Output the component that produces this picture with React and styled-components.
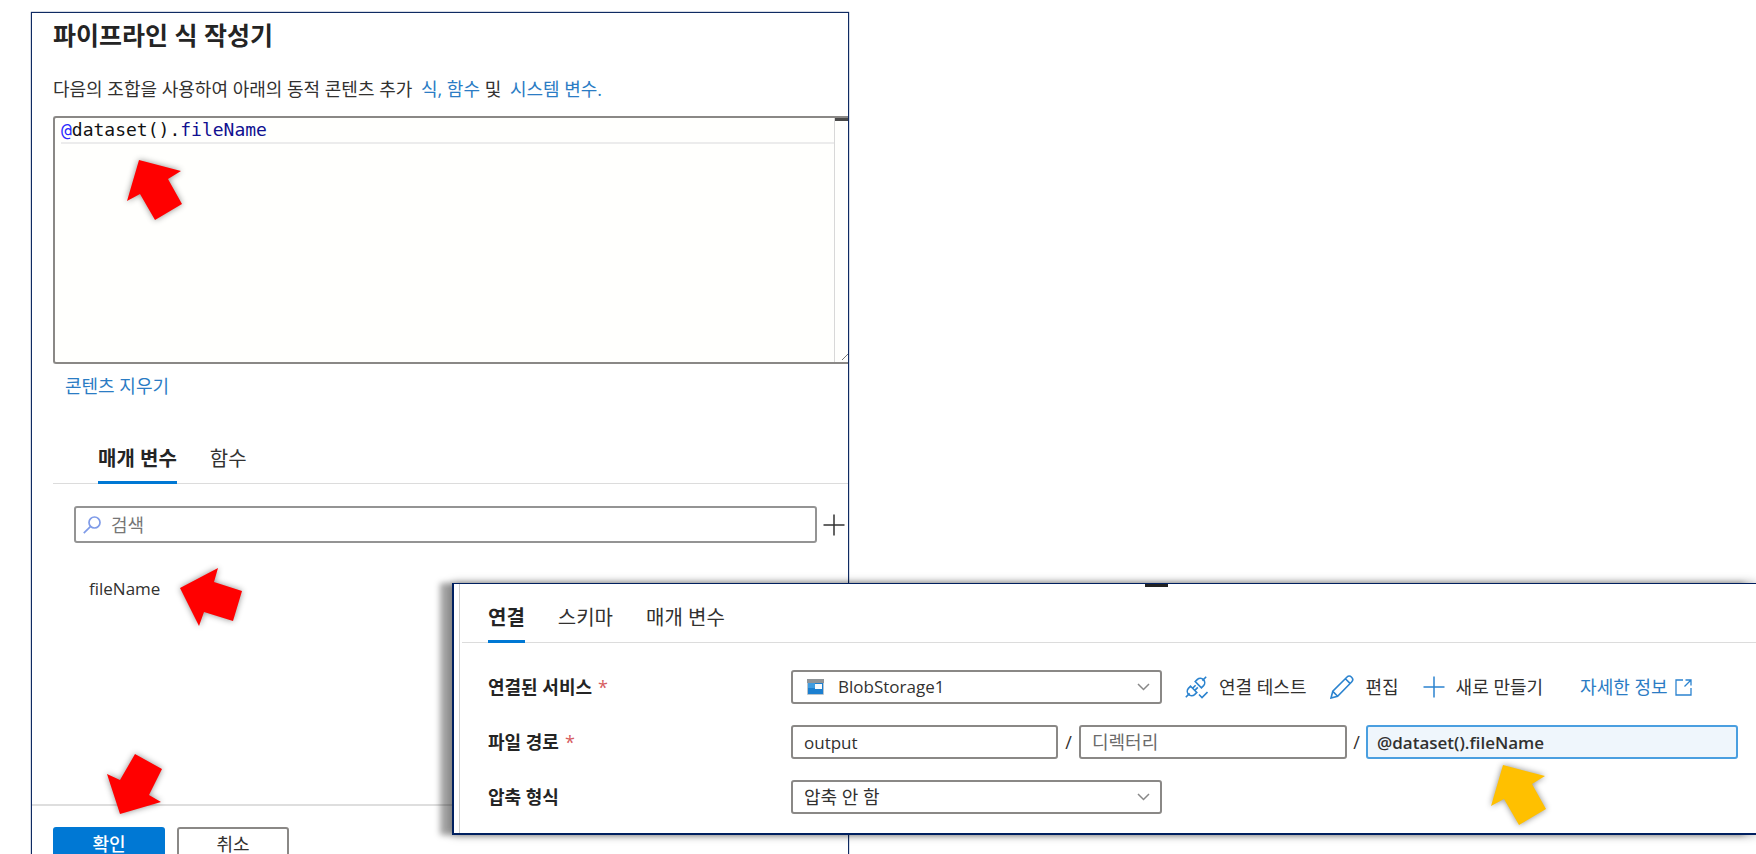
import React from "react";
import styled, { createGlobalStyle } from "styled-components";

const ui = '"Open Sans", "Noto Sans CJK KR", sans-serif';
const navy = "#0f2a63";
const ink = "#323130";
const blue = "#0078d4";
const linkBlue = "#2b7cc4";
const grey = "#8a8886";

const Global = createGlobalStyle`
  *, *::before, *::after { box-sizing: border-box; }
  body { margin: 0; background: #fff; color: ${ink}; font: 18px/26px ${ui}; }
  button, input, select { font: inherit; color: inherit; }
`;

const Page = styled.main`
  position: relative;
  height: 100vh;
  overflow: hidden;
  padding: 12px 0 0 31px;
`;

const Builder = styled.section`
  position: relative;
  width: 818px;
  max-width: 100%;
  padding-top: 6px;
  border: 1px solid ${navy};
  box-shadow: 0 0 1px ${navy};
`;

const Title = styled.h1`
  margin: 0 0 25px 21px;
  font-size: 25px;
  line-height: 32px;
  font-weight: 700;
  color: #242424;
`;

const Intro = styled.p`
  margin: 0 0 14px 21px;
  white-space: nowrap;
`;

const Link = styled.a`
  color: ${linkBlue};
  text-decoration: none;
  margin-left: ${(p) => (p.$spaced ? 4 : 0)}px;
`;

const Editor = styled.div`
  position: relative;
  display: flex;
  height: 248px;
  margin-left: 21px;
  border: 2px solid ${grey};
  border-right: 0;
  border-radius: 3px 0 0 3px;
  background: #fffffd;
`;

const Code = styled.div`
  flex: 1;
  padding-left: 6px;
  outline: 0;
  font: 18px/24px "DejaVu Sans Mono", monospace;
  color: #111;
`;

const CodeLine = styled.div`
  height: 26px;
  border: 1px solid #ececec;
  border-width: 0 0 2px;
`;

const Token = styled.span`
  color: ${(p) => p.$color};
`;

const Ruler = styled.div`
  display: flex;
  width: 14px;
  flex-direction: column;
  justify-content: space-between;
  align-items: flex-end;
  border-left: 1px solid #d8d8d8;
`;

const RulerMark = styled.div`
  width: 100%;
  height: 3px;
  background: #4a4a4a;
`;

const ClearRow = styled.div`
  padding: 9px 0 0 33px;
`;

const Tabs = styled.div`
  display: flex;
  gap: 33px;
  border-bottom: 1px solid #dcdcdc;
`;

const BuilderTabs = styled(Tabs)`
  margin: 45px 0 0 21px;
  padding-left: 45px;
`;

const Tab = styled.button`
  height: 40px;
  margin-bottom: -1px;
  padding: 1px 0 8px;
  border: 0;
  border-bottom: 3px solid ${(p) => (p.$active ? blue : "transparent")};
  background: none;
  font-size: 20px;
  line-height: 28px;
  font-weight: ${(p) => (p.$active ? 700 : 400)};
  color: ${(p) => (p.$active ? "#242424" : ink)};
`;

const SearchRow = styled.div`
  display: flex;
  align-items: center;
  gap: 6px;
  margin: 22px 3px 0 42px;
`;

const SearchBox = styled.label`
  display: flex;
  align-items: center;
  flex: 1;
  gap: 10px;
  height: 37px;
  padding-left: 7px;
  border: 2px solid #949494;
  border-radius: 3px;
`;

const SearchInput = styled.input`
  flex: 1;
  min-width: 0;
  padding: 0;
  border: 0;
  outline: 0;
  background: none;
  &::placeholder { color: #767676; opacity: 1; }
`;

const IconButton = styled.button`
  display: flex;
  padding: 0;
  border: 0;
  background: none;
`;

const Parameters = styled.ul`
  position: relative;
  min-height: 228px;
  margin: 33px 0 0;
  padding: 0 0 0 57px;
  font-size: 17px;
  list-style: none;
`;

const Footer = styled.footer`
  position: relative;
  display: flex;
  gap: 12px;
  padding: 21px 21px 20px;
  border-top: 2px solid #dedede;
`;

const FooterButton = styled.button`
  width: 112px;
  height: 34px;
  padding: 0;
  line-height: 20px;
  border: ${(p) => (p.$primary ? "0" : "2px solid #8a8886")};
  border-radius: 3px;
  background: ${(p) => (p.$primary ? blue : "#fff")};
  color: ${(p) => (p.$primary ? "#fff" : ink)};
  font-weight: ${(p) => (p.$primary ? 500 : 400)};
`;

const Dataset = styled.section`
  position: absolute;
  top: 583px;
  left: 452px;
  right: 0;
  height: 252px;
  padding-left: 5px;
  border: 1px solid #002060;
  border-width: 1px 0 2px 2px;
  background: #fff;
  box-shadow: -12px 0 6px rgba(0, 0, 0, 0.36), 0 0 9px rgba(0, 0, 0, 0.36);
`;

const DatasetBody = styled.div`
  height: 100%;
  padding-left: 2px;
  border-left: 1px solid #d0d0d0;
`;

const Grip = styled.div`
  position: absolute;
  top: 0;
  left: 691px;
  width: 23px;
  height: 3px;
  background: #222;
`;

const DatasetTabs = styled(Tabs)`
  padding: 19px 0 0 26px;
`;

const Form = styled.form`
  display: grid;
  gap: 21px;
  padding: 27px 18px 0 26px;
`;

const FormRow = styled.div`
  display: grid;
  grid-template-columns: 303px 1fr;
  align-items: center;
  height: 34px;
`;

const Label = styled.label`
  font-weight: 700;
  color: #242424;
`;

const Required = styled.span`
  margin-left: 6px;
  font-weight: 400;
  color: #d65c60;
`;

const Controls = styled.div`
  display: flex;
  align-items: center;
  white-space: nowrap;
`;

const PathControls = styled.div`
  display: grid;
  grid-template-columns: 267fr 21px 268fr 19px 372fr;
  align-items: center;
`;

const Field = styled.input`
  width: 100%;
  min-width: 0;
  height: 34px;
  padding: 0 11px;
  border: 2px solid #8a8886;
  border-radius: 3px;
  outline: 0;
  background: #fff;
  font-size: 17px;
  &::placeholder { color: #6b6b6b; opacity: 1; font-size: 18px; }
`;

const ExpressionBox = styled.div`
  position: relative;
  display: flex;
  min-width: 0;
`;

const ExpressionField = styled(Field)`
  padding: 0 9px;
  border-color: #4a9fe0;
  background: #eff6fc;
  font-weight: 600;
`;

const Slash = styled.span`
  text-align: center;
`;

const SelectBox = styled.div`
  position: relative;
  width: 371px;
`;

const Select = styled.select`
  width: 100%;
  height: 34px;
  padding: 0 40px 0 ${(p) => (p.$icon ? 45 : 11)}px;
  border: 2px solid #8a8886;
  border-radius: 3px;
  outline: 0;
  background: #fff;
  font-size: ${(p) => (p.$icon ? 17 : 18)}px;
  appearance: none;
`;

const SelectIcon = styled.span`
  position: absolute;
  top: 0;
  bottom: 0;
  ${(p) => (p.$side === "left" ? "left: 16px;" : "right: 12px;")}
  display: flex;
  align-items: center;
  pointer-events: none;
`;

const Actions = styled.div`
  display: flex;
  align-items: center;
  gap: 24px;
  margin-left: 23px;
`;

const Action = styled.button`
  display: flex;
  align-items: center;
  gap: 11px;
  padding: 0;
  border: 0;
  background: none;
`;

const MoreLink = styled(Link)`
  display: flex;
  align-items: center;
  gap: 7px;
  margin-left: 13px;
`;

const Pointer = styled.svg`
  position: absolute;
  left: ${(p) => p.$x}px;
  top: ${(p) => p.$y}px;
  overflow: visible;
  pointer-events: none;
  filter: drop-shadow(0 0 3px rgba(0, 0, 0, 0.45));
`;

const arrowShapes = {
  up: "12,0 54,11 41,19 55,44 28,60 13,34 0,41",
  left: "0,20 38,0 34,14 62,23 53,53 24,44 19,58",
  down: "13,60 0,20 13,26 28,0 55,15 42,41 54,48",
};

const Arrow = ({ direction, color = "#ff0000", x, y }) => (
  <Pointer width="62" height="60" $x={x} $y={y} aria-hidden="true">
    <polygon points={arrowShapes[direction]} fill={color} />
  </Pointer>
);

const Svg = ({ w, h, color, width = 1.5, children }) => (
  <svg width={w} height={h} viewBox={`0 0 ${w} ${h}`} fill="none" stroke={color} strokeWidth={width} aria-hidden="true">
    {children}
  </svg>
);

const Plus = ({ color }) => (
  <Svg w={22} h={22} color={color}>
    <path d="M0.5 11H21.5M11 0.5V21.5" />
  </Svg>
);

const Chevron = () => (
  <Svg w={13} h={8} color="#888">
    <path d="M1 1L6.5 6.5L12 1" />
  </Svg>
);

const SearchIcon = () => (
  <Svg w={18} h={18} color="#7f9be8" width={1.7}>
    <circle cx="11.5" cy="6.5" r="5.5" />
    <path d="M7.6 10.4L0.8 17.2" />
  </Svg>
);

const BlobIcon = () => (
  <svg width="17" height="16" viewBox="0 0 17 16" aria-hidden="true">
    <rect width="17" height="16" rx="1" fill="#b9c4cd" />
    <rect width="17" height="4" fill="#8f9498" />
    <rect x="1" y="4" width="15" height="11" fill="#1b7fd0" />
    <rect x="1" y="4" width="7" height="5" fill="#3f9ce0" />
    <rect x="8" y="5" width="7" height="5" fill="#f5f9fc" />
  </svg>
);

const PlugIcon = () => (
  <Svg w={23} h={23} color="#2b83cf" width={1.6}>
    <path d="M17.4 4.6L21.2 0.8M0.8 21.2L4.6 17.4" />
    <path d="M10.2 5.6L12.4 3.4C14.2 1.8 16.8 2 18.4 3.6C20 5.2 20.2 7.8 18.6 9.6L16.4 11.8Z" />
    <path d="M5.6 10.2L11.8 16.4L9.6 18.6C7.8 20.2 5.2 20 3.6 18.4C2 16.8 1.8 14.2 3.4 12.4Z" />
    <path d="M7.6 12.2L10.6 9.2M9.8 14.4L12.8 11.4" />
    <path d="M14 18.5L17 21.5L22.5 16" />
  </Svg>
);

const PencilIcon = () => (
  <Svg w={24} h={24} color="#2b83cf" width={1.6}>
    <path d="M1 23L2.8 16.2L16.8 2.2C18.2 0.8 20.2 0.8 21.6 2.2C23 3.6 23 5.6 21.6 7L7.6 21.2L1 23ZM15.4 3.8L20 8.4M2.8 16.4L7.4 21" />
  </Svg>
);

const ExternalIcon = () => (
  <Svg w={17} h={17} color="#2b83cf" width={1.3}>
    <path d="M8 1H1V16H16V9M10.5 1H16V6.5M16 1L9.5 7.5" />
  </Svg>
);

const ResizeIcon = () => (
  <Svg w={6} h={8} color="#777" width={1}>
    <path d="M0 6L6 0" />
  </Svg>
);

export default function App() {
  return (
    <Page>
      <Global />
      <Builder>
        <Title>파이프라인 식 작성기</Title>
        <Intro>
          다음의 조합을 사용하여 아래의 동적 콘텐츠 추가 <Link href="#expressions" $spaced>식, 함수</Link> 및{" "}
          <Link href="#variables" $spaced>시스템 변수.</Link>
        </Intro>
        <Editor>
          <Code role="textbox" aria-label="식" contentEditable suppressContentEditableWarning spellCheck={false}>
            <CodeLine>
              <Token $color="#2a2aff">@</Token>dataset().<Token $color="#101090">fileName</Token>
            </CodeLine>
          </Code>
          <Ruler>
            <RulerMark />
            <ResizeIcon />
          </Ruler>
          <Arrow direction="up" x={72} y={42} />
        </Editor>
        <ClearRow>
          <Link href="#clear">콘텐츠 지우기</Link>
        </ClearRow>
        <BuilderTabs role="tablist">
          <Tab role="tab" aria-selected="true" $active>매개 변수</Tab>
          <Tab role="tab" aria-selected="false">함수</Tab>
        </BuilderTabs>
        <SearchRow>
          <SearchBox>
            <SearchIcon />
            <SearchInput placeholder="검색" aria-label="검색" />
          </SearchBox>
          <IconButton aria-label="매개 변수 추가">
            <Plus color="#333" />
          </IconButton>
        </SearchRow>
        <Parameters>
          <li>fileName</li>
          <Arrow direction="left" x={148} y={-8} />
        </Parameters>
        <Footer>
          <FooterButton $primary>확인</FooterButton>
          <FooterButton>취소</FooterButton>
          <Arrow direction="down" x={75} y={-52} />
        </Footer>
      </Builder>

      <Dataset>
        <Grip />
        <DatasetBody>
          <DatasetTabs role="tablist">
            <Tab role="tab" aria-selected="true" $active>연결</Tab>
            <Tab role="tab" aria-selected="false">스키마</Tab>
            <Tab role="tab" aria-selected="false">매개 변수</Tab>
          </DatasetTabs>
          <Form onSubmit={(e) => e.preventDefault()}>
            <FormRow>
              <Label htmlFor="service">연결된 서비스<Required>*</Required></Label>
              <Controls>
                <SelectBox>
                  <Select id="service" $icon>
                    <option>BlobStorage1</option>
                  </Select>
                  <SelectIcon $side="left"><BlobIcon /></SelectIcon>
                  <SelectIcon $side="right"><Chevron /></SelectIcon>
                </SelectBox>
                <Actions>
                  <Action type="button"><PlugIcon />연결 테스트</Action>
                  <Action type="button"><PencilIcon />편집</Action>
                  <Action type="button"><Plus color="#2b83cf" />새로 만들기</Action>
                  <MoreLink href="#more">자세한 정보<ExternalIcon /></MoreLink>
                </Actions>
              </Controls>
            </FormRow>
            <FormRow>
              <Label htmlFor="container">파일 경로<Required>*</Required></Label>
              <PathControls>
                <Field id="container" defaultValue="output" />
                <Slash>/</Slash>
                <Field placeholder="디렉터리" aria-label="디렉터리" />
                <Slash>/</Slash>
                <ExpressionBox>
                  <ExpressionField defaultValue="@dataset().fileName" aria-label="파일 이름" />
                  <Arrow direction="up" color="#ffc000" x={125} y={40} />
                </ExpressionBox>
              </PathControls>
            </FormRow>
            <FormRow>
              <Label htmlFor="compression">압축 형식</Label>
              <Controls>
                <SelectBox>
                  <Select id="compression">
                    <option>압축 안 함</option>
                  </Select>
                  <SelectIcon $side="right"><Chevron /></SelectIcon>
                </SelectBox>
              </Controls>
            </FormRow>
          </Form>
        </DatasetBody>
      </Dataset>
    </Page>
  );
}
